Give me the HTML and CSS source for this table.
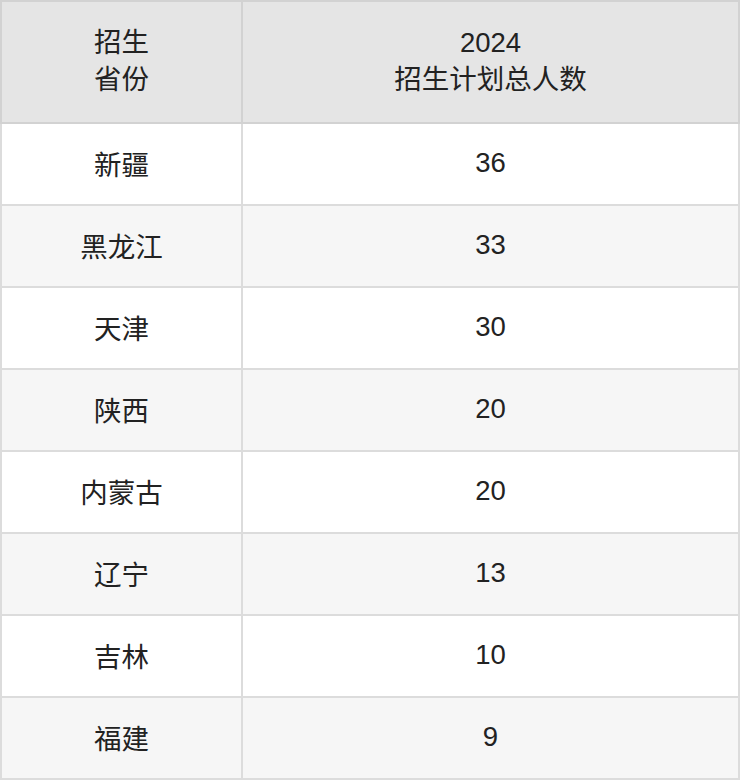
FILE: index.html
```html
<!DOCTYPE html>
<html lang="zh-CN">
<head>
<meta charset="utf-8">
<link rel="stylesheet" href="styles.css">
</head>
<body>
<table class="plan">
  <colgroup><col class="c1"><col class="c2"></colgroup>
  <thead>
    <tr><th>招生<br>省份</th><th>2024<br>招生计划总人数</th></tr>
  </thead>
  <tbody>
    <tr><td>新疆</td><td>36</td></tr>
    <tr><td>黑龙江</td><td>33</td></tr>
    <tr><td>天津</td><td>30</td></tr>
    <tr><td>陕西</td><td>20</td></tr>
    <tr><td>内蒙古</td><td>20</td></tr>
    <tr><td>辽宁</td><td>13</td></tr>
    <tr><td>吉林</td><td>10</td></tr>
    <tr><td>福建</td><td>9</td></tr>
  </tbody>
</table>
</body>
</html>
```
FILE: styles.css
```css
html, body {
  margin: 0;
  padding: 0;
  background: #fff;
}
.plan {
  width: 740px;
  border-collapse: collapse;
  table-layout: fixed;
  font-family: "Liberation Sans", "Noto Sans CJK SC", sans-serif;
  font-size: 27.5px;
  color: #222;
}
.plan .c1 { width: 241px; }
.plan th, .plan td {
  border: 2px solid #dcdcdc;
  text-align: center;
  vertical-align: middle;
  padding: 0 0 2px 0;
  font-weight: normal;
}
.plan th {
  background: #e5e5e5;
  border-color: #d2d2d2;
  height: 118px;
  line-height: 37px;
}
.plan td {
  height: 78px;
}
.plan tbody tr:nth-child(even) td {
  background: #f6f6f6;
}
```
